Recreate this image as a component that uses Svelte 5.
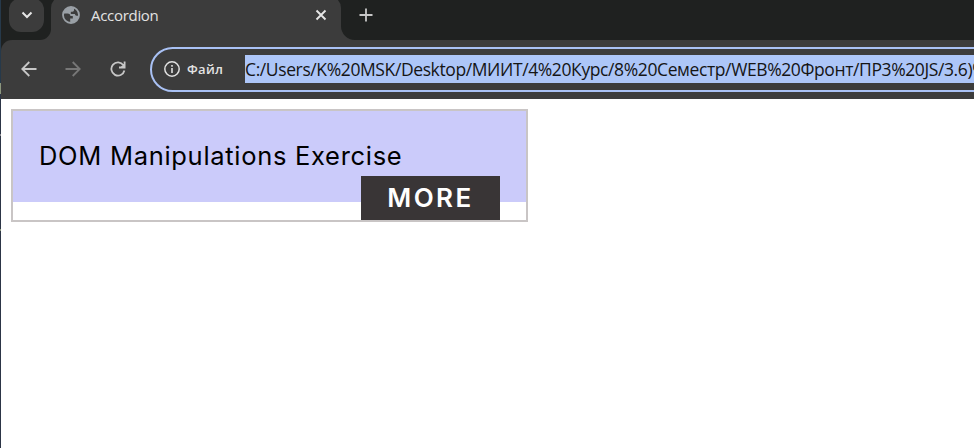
<script>
  const title = 'Accordion';
  const address = 'C:/Users/K%20MSK/Desktop/МИИТ/4%20Курс/8%20Семестр/WEB%20Фронт/ПР3%20JS/3.6)%';
</script>

<div class="screen">
  <div class="edge"></div>
  <div class="browser">
    <header class="tabs">
      <button class="search" aria-label="Search tabs">
        <svg width="12" height="8" viewBox="0 0 12 8"><path d="M1.5 1.5 6 6l4.5-4.5" fill="none" stroke="#e6e6e6" stroke-width="2" /></svg>
      </button>
      <div class="tab">
        <svg class="foot left" width="11" height="11" viewBox="0 0 11 11"><path d="M11 0v11H0A11 11 0 0 0 11 0Z" fill="#3c3c3c" /></svg>
        <svg class="globe" width="18" height="18" viewBox="0 0 18 18">
          <circle cx="9" cy="9" r="8" fill="#3c3c3c" stroke="#9aa0a6" stroke-width="1.8" />
          <path d="M9.5 1.2C6 1 2.5 3.3 1.4 7.5h4.2c1.8 0 2.8 1 2.8 2.6h2.4v2.5H8.2v4.1C13 17 16.7 13.5 16.8 9.8h-2.2c-1 0-1.6-.7-1.6-1.7H8.8V5.7h1.6c1 0 1.6-.6 1.6-1.6V1.8Z" fill="#9aa0a6" />
        </svg>
        <span class="name">{title}</span>
        <svg class="close" width="12" height="12" viewBox="0 0 12 12"><path d="m1.5 1.5 9 9m0-9-9 9" stroke="#e6e6e6" stroke-width="1.9" /></svg>
        <svg class="foot right" width="14" height="14" viewBox="0 0 14 14"><path d="M0 0v14H14A14 14 0 0 1 0 0Z" fill="#3c3c3c" /></svg>
      </div>
      <svg class="plus" width="14" height="14" viewBox="0 0 14 14"><path d="M7 .5v13M.5 7h13" stroke="#c7c7c7" stroke-width="1.8" /></svg>
    </header>
    <nav class="toolbar">
      <svg class="back" width="16" height="16" viewBox="0 0 16 16"><path d="M15.5 8H1.5M8.3 1 1.3 8l7 7" fill="none" stroke="#c7c7c7" stroke-width="1.8" /></svg>
      <svg class="forward" width="16" height="16" viewBox="0 0 16 16"><path d="M.5 8h14M7.7 1l7 7-7 7" fill="none" stroke="#777" stroke-width="1.8" /></svg>
      <svg class="reload" width="16" height="16" viewBox="0 0 16 16"><path d="M13.4 4.2A6.6 6.6 0 1 0 14.4 9.5M14.6.5v6H9M14.6 3.2v3.3h-3.4Z" fill="none" stroke="#c7c7c7" stroke-width="1.8" /></svg>
      <div class="omnibox">
        <svg class="info" width="16" height="16" viewBox="0 0 16 16"><circle cx="8" cy="8" r="7.2" fill="none" stroke="#e0e0e0" stroke-width="1.5" /><path d="M8 7v5M8 4v1.8" stroke="#e0e0e0" stroke-width="1.6" /></svg>
        <span class="scheme">Файл</span>
        <span class="url">{address}</span>
      </div>
    </nav>
    <main>
      <section class="accordion">
        <div class="heading">DOM Manipulations Exercise</div>
        <button class="more">MORE</button>
      </section>
    </main>
  </div>
</div>

<style>
  .screen { display: flex; width: 974px; height: 448px; overflow: hidden; background: #fff; }
  .edge { width: 1px; flex: none; background: linear-gradient(#26394a 0 83px, #8c977e 83px 94px, #2c3546 94px 134px, #8b8a91 134px 136px, #2c3546 136px 229px, #8c977e 229px 231px, #2c3546 231px); }
  .browser { width: 973px; flex: none; background: #1f2120; }
  button { border: 0; margin: 0; padding: 0; }
  svg { display: block; flex: none; }
  .tabs { height: 40px; display: flex; align-items: flex-start; background: #1f2120; }
  .search { flex: none; width: 35px; height: 34px; margin: -2px 0 0 8px; border-radius: 12px; background: #3c3c3c; display: flex; align-items: center; justify-content: center; }
  .tab { position: relative; display: flex; align-items: center; box-sizing: border-box; flex: none; width: 290px; height: 44px; margin: -4px 0 0 7px; padding: 0 14px 7px 11px; border-radius: 12px 12px 0 0; background: #3c3c3c; }
  .foot { position: absolute; bottom: 0; }
  .left { left: -11px; }
  .right { right: -14px; }
  .name { flex: 1; margin-left: 11px; font: 15px/20px "Open Sans", "Noto Sans", sans-serif; letter-spacing: -0.3px; color: #e3e3e3; }
  .plus { margin: 8px 0 0 18px; }
  .toolbar { height: 59px; display: flex; align-items: center; box-sizing: border-box; padding: 0 0 2px 20px; border-radius: 11px 0 0; background: #3c3c3c; }
  .forward { margin-left: 28px; }
  .reload { margin-left: 29px; }
  .omnibox { display: flex; align-items: center; flex: none; box-sizing: border-box; width: 900px; height: 45px; margin: 2px 0 0 24px; padding: 0 0 1px 12px; border: 2.5px solid #a9c1f4; border-radius: 23px; overflow: hidden; }
  .scheme { width: 58px; flex: none; margin-left: 7px; font: 600 13px/20px "Open Sans", "Noto Sans", sans-serif; letter-spacing: 0.3px; color: #e3e3e3; }
  .url { flex: none; height: 28px; background: #adc6f8; color: #151515; white-space: nowrap; font: 17.5px/28px "Open Sans", "Noto Sans", sans-serif; letter-spacing: -0.39px; }
  main { height: 349px; box-sizing: border-box; padding: 10px; background: #fff; }
  .accordion { display: flex; flex-direction: column; box-sizing: border-box; width: 517px; height: 113px; border: 2px solid #c9c5c5; }
  .heading { height: 91px; box-sizing: border-box; flex: none; padding-left: 26px; background: #cbcbfa; color: #000; font: 25.5px/90px Inter, sans-serif; letter-spacing: 0.7px; white-space: nowrap; }
  .more { position: relative; align-self: flex-end; flex: none; width: 139px; height: 44px; margin: -26px 26px 0 0; background: #393536; color: #fff; font: 600 26px/44px Inter, sans-serif; letter-spacing: 2.4px; text-align: center; }
</style>
